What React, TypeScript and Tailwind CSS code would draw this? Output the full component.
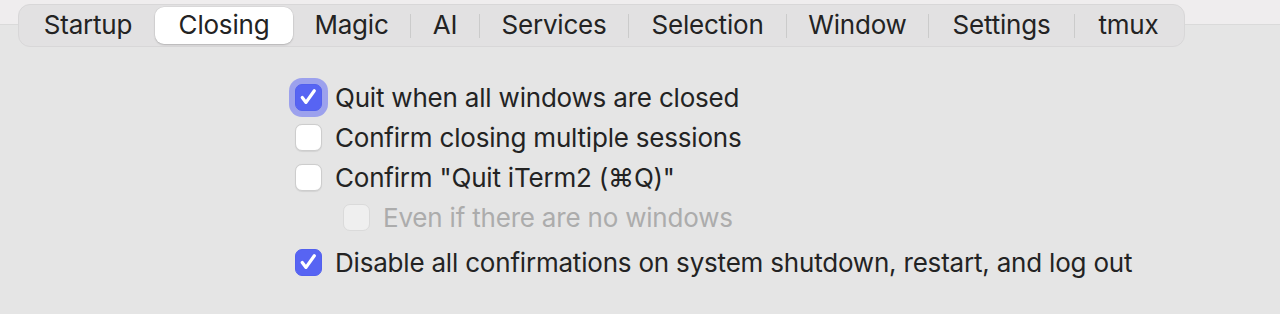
const TABS = [
  { label: "Startup", w: "w-[134px]" },
  { label: "Closing", w: "w-[138px]", selected: true },
  { label: "Magic", w: "w-[117px]" },
  { label: "AI", w: "w-[68px]", sep: true },
  { label: "Services", w: "w-[148px]", sep: true },
  { label: "Selection", w: "w-[157px]", sep: true },
  { label: "Window", w: "w-[141px]", sep: true },
  { label: "Settings", w: "w-[145px]", sep: true },
  { label: "tmux", w: "w-[107px]", sep: true },
];

function Check({
  checked,
  disabled,
  focused,
}: {
  checked?: boolean;
  disabled?: boolean;
  focused?: boolean;
}) {
  let cls = "bg-white border border-[#cdcdcd] shadow-[0_0.5px_1px_rgba(0,0,0,0.08)]";
  if (checked) cls = "bg-[#5764f3] border border-[#5260ee]";
  if (disabled) cls = "bg-[#efefef] border border-[#dadada]";
  return (
    <span
      className={`w-[27px] h-[27px] rounded-[7px] flex items-center justify-center flex-shrink-0 ${cls} ${
        focused ? "shadow-[0_0_0_6px_rgba(96,106,244,0.55)]" : ""
      }`}
    >
      {checked ? (
        <svg width="27" height="27" viewBox="0 0 28 28" fill="none">
          <path
            d="M7 14 L11.2 19.5 L20.5 6.5"
            stroke="white"
            strokeWidth={3.6}
            strokeLinecap="round"
            strokeLinejoin="round"
          />
        </svg>
      ) : null}
    </span>
  );
}

function Row({
  label,
  checked,
  disabled,
  focused,
  indent,
  className = "",
}: {
  label: string;
  checked?: boolean;
  disabled?: boolean;
  focused?: boolean;
  indent?: boolean;
  className?: string;
}) {
  return (
    <label className={`h-[40px] flex items-center gap-[13px] ${indent ? "pl-[48px]" : ""} ${className}`}>
      <Check checked={checked} disabled={disabled} focused={focused} />
      <span
        className={`text-[26px] leading-none tracking-[-0.2px] pt-[2px] ${
          disabled ? "text-[#acacac]" : "text-[#232323]"
        }`}
      >
        {label}
      </span>
    </label>
  );
}

export default function App() {
  return (
    <div
      className="w-[1280px] h-[314px] bg-[#e5e5e5] overflow-hidden"
      style={{ fontFamily: "Inter, 'Liberation Sans', sans-serif" }}
    >
      <div className="pt-[4px] pl-[18px] bg-[linear-gradient(to_bottom,#efedee_0,#efedee_24px,#dadada_24px,#dadada_25px,#e5e5e5_25px)]">
        <div className="inline-flex items-center p-[2px] h-[43px] rounded-[12px] bg-[#e2e1e2] border border-[#d8d7d8]">
          {TABS.map((t) => (
            <div key={t.label} className="flex items-center h-full">
              {t.sep ? <div className="w-px h-[24px] bg-[#cbcbcb]" /> : null}
              <div
                className={`${t.w} h-full flex items-center justify-center pb-[2px] text-[26px] leading-none tracking-[-0.2px] text-[#232323] ${
                  t.selected
                    ? "bg-white rounded-[9px] shadow-[0_1px_2px_rgba(0,0,0,0.18),0_0_0_0.5px_rgba(0,0,0,0.06)]"
                    : ""
                }`}
              >
                {t.label}
              </div>
            </div>
          ))}
        </div>
      </div>

      <div className="pl-[295px] pt-[30px] flex flex-col">
        <Row label="Quit when all windows are closed" checked focused />
        <Row label="Confirm closing multiple sessions" />
        <Row label={'Confirm "Quit iTerm2 (\u2318Q)"'} />
        <Row label="Even if there are no windows" disabled indent />
        <Row label="Disable all confirmations on system shutdown, restart, and log out" checked className="mt-[5px]" />
      </div>
    </div>
  );
}
